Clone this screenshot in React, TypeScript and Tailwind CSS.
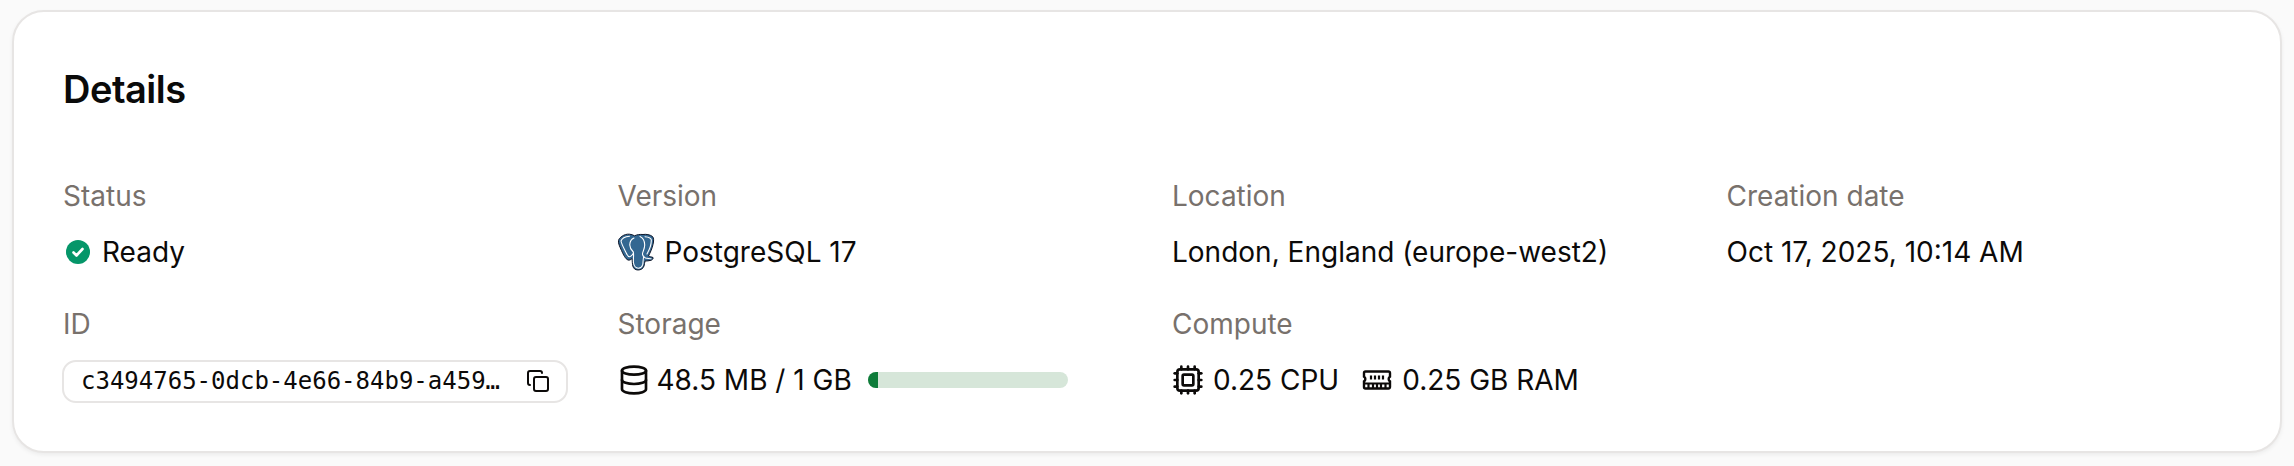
import { Copy, Cpu, Database } from "lucide-react";
import type { ReactNode } from "react";

function Field({ label, children }: { label: string; children: ReactNode }) {
  return (
    <div className="flex min-w-0 flex-col gap-[14px]">
      <div className="h-[42px] text-[28px] leading-[42px] text-[#78716c]">{label}</div>
      <div className="flex h-[42px] items-center text-[28px] leading-[42px] text-[#0c0a09]">{children}</div>
    </div>
  );
}

function PostgresIcon() {
  return (
    <svg width="38" height="38" viewBox="0 0 38 38" className="mr-[10px] ml-[-1px] shrink-0">
      <path
        d="M4 4C7 1.500 10 1 12.500 1.200 14.500 1.300 16 2 17.500 2.800 20 1.600 23 1.200 26 1.500 29 1 33 1.600 35.500 3.500 37 5 36.800 8 36 11.500 35 16 33 20 31.500 23c1 .8 3 .8 4.500 1.500.5 1-.5 2.200-2 2.800-2 .7-4 .5-6 .7-.5 1.500-.5 3.500-1 5-.8 2.500-3 4-6 4-3-.1-4.500-1.500-5.200-4-.5-2-.5-4.800-.8-7.500-1 1-2.500 2-4 1.500C8.500 26 6.500 22 4.500 17.500 3 14 1 10.500 1.500 7.500 1.800 6 2.800 5 4 4Z"
        fill="#336791"
        stroke="#0f172a"
        strokeWidth="1"
      />
      <path
        d="M12.500 3.200C9 3.500 5 5 4 8c.5 3 3 7.500 5 11.500 1 2.200 2.500 4.500 3.700 4.300 1.500-.4 2.800-2 3.800-3.800M17 5c-2.500 1-4 3.500-4.200 6.500-.2 3 1.500 5.500 3.500 7.500.8 3-.300 7 .2 11 .5 3 2 5 4.800 5.200 2.500 0 4-1.700 4.500-4 .4-2.200.1-5 1-7.800M23 3.500c3 1.500 4.700 4.500 4.700 8.500 0 3.500-1.700 6-2.200 8.500-.1 1.500 1 3.500 3 4.500 2 .7 4 .3 5.500.8M28 3.800c3 .3 6 1 6.300 3 .2 4-1.600 9.500-4.300 14.200"
        fill="none"
        stroke="#ffffff"
        strokeWidth="1.100"
        strokeLinecap="round"
      />
    </svg>
  );
}

function RamIcon() {
  return (
    <svg width="30" height="24" viewBox="0 0 30 24" fill="none" className="mr-[10px] ml-[1px] shrink-0">
      <path
        d="M3.500 3.500h23A1.500 1.500 0 0 1 28 5v3.600a2.800 2.800 0 0 0 0 4.800V19a1.500 1.500 0 0 1-1.500 1.500h-23A1.500 1.500 0 0 1 2 19v-5.600a2.800 2.800 0 0 0 0-4.800V5a1.500 1.500 0 0 1 1.500-1.500Z"
        stroke="#0c0a09"
        strokeWidth="2.400"
      />
      <path d="M2 15.500h26M9 7.500v4M13 7.500v4M17 7.500v4M21 7.500v4M6.500 15.500v5M11 15.500v5M15 15.500v5M19 15.500v5M23.500 15.500v5" stroke="#0c0a09" strokeWidth="2.200" />
    </svg>
  );
}

export default function App() {
  return (
    <div className="h-[466px] w-[2294px] overflow-hidden bg-[#fafafa] pt-[10px] font-['Inter',sans-serif]">
      <section className="mx-3 h-[443px] rounded-[32px] border-2 border-[#e7e5e4] bg-white pt-[49px] pr-[47px] pl-[49px] shadow-[0_2px_4px_rgba(0,0,0,0.06)]">
        <h2 className="text-[38px] leading-[56px] font-semibold tracking-[-0.5px] text-[#0a0a0a]">Details</h2>
        <div className="mt-[58px] grid grid-cols-4 gap-x-12 gap-y-[30px]">
          <Field label="Status">
            <svg width="24" height="24" viewBox="0 0 24 24" className="mr-[12px] ml-[3px] shrink-0">
              <circle cx="12" cy="12" r="12" fill="#059669" />
              <path d="M7.500 12.500l3 3 6-6.500" fill="none" stroke="#ffffff" strokeWidth="2.600" strokeLinecap="round" strokeLinejoin="round" />
            </svg>
            <span>Ready</span>
          </Field>
          <Field label="Version">
            <PostgresIcon />
            <span>PostgreSQL 17</span>
          </Field>
          <Field label="Location">
            <span>London, England (europe-west2)</span>
          </Field>
          <Field label="Creation date">
            <span>Oct 17, 2025, 10:14 AM</span>
          </Field>
          <Field label="ID">
            <div className="flex h-[43px] w-[506px] -translate-x-px translate-y-px items-center justify-between rounded-[14px] border-2 border-[#e7e5e4] pr-[16px] pl-[17px]">
              <span className="font-['DejaVu_Sans_Mono',monospace] text-[24px] leading-none">c3494765-0dcb-4e66-84b9-a459…</span>
              <Copy size={24} strokeWidth={2} className="shrink-0" />
            </div>
          </Field>
          <Field label="Storage">
            <Database size={32} strokeWidth={2} className="mr-[7px] shrink-0" />
            <span>48.5 MB / 1 GB</span>
            <div className="ml-[16px] h-[16px] w-[200px] overflow-hidden rounded-full bg-[#d6e6d9]">
              <div className="h-full w-[10px] bg-[#0e7c3a]" />
            </div>
          </Field>
          <Field label="Compute">
            <Cpu size={32} strokeWidth={2} className="mr-[9px] shrink-0" />
            <span>0.25 CPU</span>
            <span className="ml-[22px] flex items-center">
              <RamIcon />
              <span>0.25 GB RAM</span>
            </span>
          </Field>
        </div>
      </section>
    </div>
  );
}
